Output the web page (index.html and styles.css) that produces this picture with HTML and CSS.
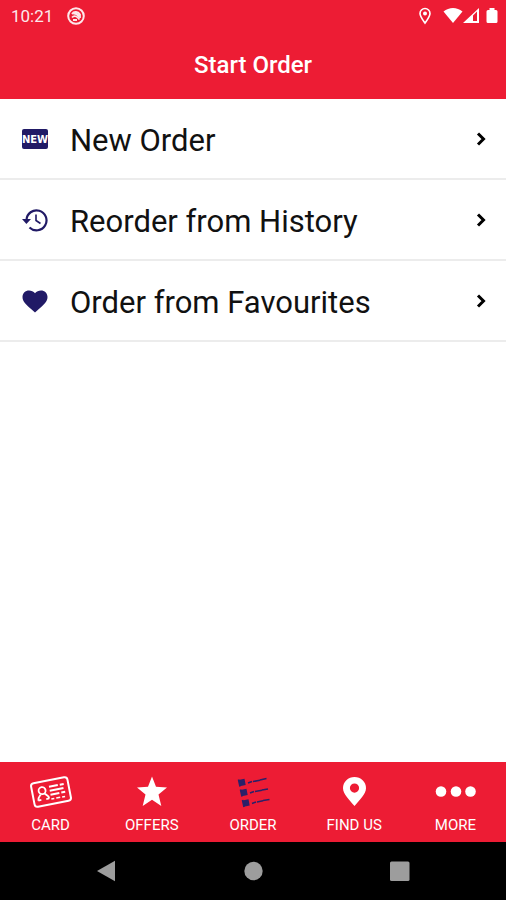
FILE: index.html
```html
<!DOCTYPE html>
<html lang="en">
<head>
<meta charset="utf-8">
<meta name="viewport" content="width=device-width, initial-scale=1">
<title>Start Order</title>
<link rel="stylesheet" href="styles.css">
</head>
<body>
<header class="top">
  <div class="status">
    <span class="time">10:21</span>
    <svg class="app-icon" width="18" height="18" viewBox="0 0 18 18" fill="none" stroke="currentColor"><circle cx="9" cy="9" r="7.8" stroke-width="2"/><path d="M5 7C7 4 11 4.500 13 7.500V11M5 10.500C7 8 10 9 12.500 12.500M6 13h4" stroke-width="1.800"/><path d="M5 7l4-2 4 3-1 3-3-3z" fill="currentColor" stroke="none"/></svg>
    <svg class="loc" width="14" height="18" viewBox="0 0 14 18" fill="none" stroke="currentColor"><path d="M7 16C4.500 12.500 2 9.500 2 6.500a5 5 0 0 1 10 0C12 9.500 9.500 12.500 7 16z" stroke-width="1.600"/><circle cx="7" cy="6.500" r="2" fill="currentColor" stroke="none"/></svg>
    <svg class="wifi" width="20" height="18" viewBox="0 0 20 18" fill="currentColor"><path d="M0.500 4.500C6-.2 14-.2 19.500 4.500L10 16z"/></svg>
    <svg width="17" height="18" viewBox="0 0 17 18" fill="currentColor"><path fill-rule="evenodd" d="M0 16L16 1v15zM10 8.500V14h4V4.500z"/></svg>
    <svg class="battery" width="12" height="18" viewBox="0 0 12 18" fill="currentColor"><path d="M3.500 1h5v2H10a1.500 1.500 0 0 1 1.500 1.500v10A1.500 1.500 0 0 1 10 16H2A1.500 1.500 0 0 1 .5 14.500v-10A1.500 1.500 0 0 1 2 3h1.500z"/></svg>
  </div>
  <h1 class="title">Start Order</h1>
</header>
<main class="content">
  <ul class="menu">
    <li><a class="row" href="#new">
      <svg class="row-icon" width="26" height="26" viewBox="0 0 26 26"><rect x="0" y="3" width="26" height="20" rx="2" fill="currentColor"/><text class="new-mark" x="13" y="17" text-anchor="middle">NEW</text></svg>
      <span class="row-label">New Order</span>
      <svg class="chevron" width="10" height="16" viewBox="0 0 10 16"><path d="M2 2.500l5.500 5.500L2 13.500"/></svg>
    </a></li>
    <li><a class="row" href="#history">
      <svg class="row-icon" width="26" height="26" viewBox="0 0 26 26" fill="none" stroke="currentColor"><path d="M4.500 13A10 10 0 1 1 7.500 20.500" stroke-width="2.200"/><path d="M0 12h9L4.400 17z" fill="currentColor" stroke="none"/><path d="M14 7.500v6l4.500 3" stroke-width="1.600"/></svg>
      <span class="row-label">Reorder from History</span>
      <svg class="chevron" width="10" height="16" viewBox="0 0 10 16"><path d="M2 2.500l5.500 5.500L2 13.500"/></svg>
    </a></li>
    <li><a class="row" href="#favourites">
      <svg class="row-icon" width="26" height="26" viewBox="0 0 26 26" fill="currentColor"><path d="M13 24.500L10.500 22.300C4 16.500.5 13.500.5 9 .5 5.200 3.400 2.500 7 2.500c2.300 0 4.500 1 6 2.800 1.500-1.800 3.700-2.800 6-2.800 3.600 0 6.500 2.700 6.500 6.500 0 4.500-3.500 7.500-10 13.300z"/></svg>
      <span class="row-label">Order from Favourites</span>
      <svg class="chevron" width="10" height="16" viewBox="0 0 10 16"><path d="M2 2.500l5.500 5.500L2 13.500"/></svg>
    </a></li>
  </ul>
</main>
<nav class="tabs">
  <a class="tab" href="#card"><svg width="42" height="34" viewBox="0 0 42 34" fill="none" stroke="currentColor"><g transform="rotate(-11 21 17)"><rect x="2.500" y="5" width="37" height="24" rx="3" stroke-width="2"/><circle cx="12.500" cy="14" r="3.500" stroke-width="1.800"/><path d="M7 23c0-3 2-4 3.500-5.500M18 23c0-3-2-4-3.500-5.500M7 23h3M15 23h3" stroke-width="1.800"/><path d="M20 11.500h9M31 11.500h4M20 15.500h14M20 19.500h9M31 19.500h4" stroke-width="2"/><path d="M20 24h3M25 24h4M31 24h3" stroke-width="1.500"/></g></svg><span>CARD</span></a>
  <a class="tab" href="#offers"><svg width="34" height="34" viewBox="0 0 34 34" fill="currentColor"><path d="M17 1.500l4 10.200 11 .7-8.500 7L26.300 31 17 24.800 7.700 31l2.800-11.600-8.500-7 11-.7z"/></svg><span>OFFERS</span></a>
  <a class="tab" href="#order" aria-current="page"><svg class="order-icon" width="34" height="34" viewBox="0 0 34 34" fill="currentColor"><path d="M2.500 5l6-1.200 1.200 6.200-6 1.200zM4.500 15l6-1.200 1.200 6.200-6 1.200zM6.500 25.500l6-1.200 1.200 6.200-6 1.200z"/><path d="M2.500 4.500l1.500 7M4.500 14.500l1.500 7M6.500 25l1.500 7M12 8l4-1.500M17 6.500l7-1.200M24 5l6.500-1.500M14 18l4-1.500M19 16.500l7-1.200M26 15l6-1M16 28.500l4-1.500M21 27l6-1.200M27 25.500l6.500-1" fill="none" stroke="currentColor" stroke-width="1.600"/></svg><span>ORDER</span></a>
  <a class="tab" href="#find"><svg width="34" height="34" viewBox="0 0 34 34" fill="currentColor"><path fill-rule="evenodd" d="M17.500 31C13 25.500 6 19 6 13.200a11.500 11.200 0 0 1 23 0C29 19 22 25.500 17.500 31zM17.500 8.500a4.600 4.600 0 1 0 0 9.200A4.600 4.600 0 0 0 17.500 8.500z"/></svg><span>FIND US</span></a>
  <a class="tab" href="#more"><svg width="42" height="34" viewBox="0 0 42 34" fill="currentColor"><circle cx="7" cy="16.500" r="5.300"/><circle cx="22" cy="16.500" r="5.300"/><circle cx="36.500" cy="16.500" r="5.300"/></svg><span>MORE</span></a>
</nav>
<footer class="system">
  <button type="button" aria-label="Back"><svg width="20" height="22" viewBox="0 0 20 22"><path d="M1 11L19 .8v20.400z"/></svg></button>
  <button type="button" aria-label="Home"><svg width="20" height="22" viewBox="0 0 20 22"><circle cx="10.500" cy="11" r="9.200"/></svg></button>
  <button type="button" aria-label="Recent apps"><svg width="20" height="22" viewBox="0 0 20 22"><rect x="0" y="1.500" width="19.500" height="19.500" rx="1.500"/></svg></button>
</footer>
</body>
</html>
```
FILE: styles.css
```css
* { box-sizing: border-box; }

body {
  display: flex;
  flex-direction: column;
  min-height: 100vh;
  margin: 0;
  background: #fff;
  color: #111;
  font-family: Roboto, "Liberation Sans", sans-serif;
}

svg { display: block; flex: none; }

.top, .tabs { background: #ed1c34; color: #fff; }

.status {
  display: flex;
  align-items: center;
  height: 32px;
  padding: 0 8px 0 11px;
}

.time { font-size: 17px; opacity: 0.9; }
.app-icon { margin-left: 14px; opacity: 0.9; }
.loc { margin-left: auto; }
.wifi { margin-left: 11px; }
.battery { margin-left: 6px; }

.title {
  margin: 0;
  padding: 18px 0;
  font-size: 24px;
  font-weight: 500;
  line-height: 31px;
  text-align: center;
}

.content { flex: 1; }

.menu { margin: 0; padding: 0; list-style: none; }

.row {
  display: flex;
  align-items: center;
  gap: 22px;
  height: 81px;
  padding: 0 20px 0 22px;
  border-bottom: 2px solid #ececec;
  color: inherit;
  text-decoration: none;
}

.row-icon { color: #211a66; }

.row-label {
  flex: 1;
  padding-top: 4px;
  font-size: 31px;
  font-weight: 400;
  line-height: 40px;
}

.new-mark {
  fill: #fff;
  font-family: "DejaVu Sans", sans-serif;
  font-size: 10px;
  font-weight: 700;
}

.chevron { fill: none; stroke: #000; stroke-width: 3; }

.tabs {
  display: grid;
  grid-template-columns: repeat(5, 1fr);
  height: 80px;
}

.tab {
  display: flex;
  flex-direction: column;
  align-items: center;
  gap: 8px;
  padding-top: 13px;
  color: inherit;
  font-size: 15px;
  line-height: 16px;
  text-decoration: none;
}

.order-icon { color: #2b2068; }

.system {
  display: flex;
  justify-content: space-between;
  align-items: center;
  height: 58px;
  padding: 0 19%;
  background: #000;
}

.system button { padding: 0; border: 0; background: none; }
.system svg { fill: #9d9d9d; }
```
